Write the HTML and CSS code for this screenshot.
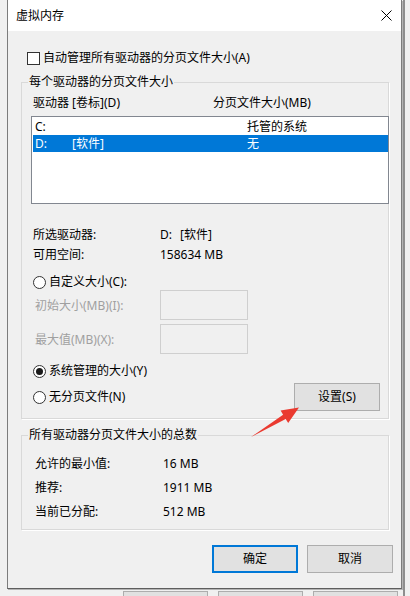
FILE: index.html
```html
<!DOCTYPE html>
<html lang="zh-CN">
<head>
<meta charset="utf-8">
<title>虚拟内存</title>
<link rel="stylesheet" href="styles.css">
</head>
<body>
<div class="desktop-edge"></div>
<div class="bg-buttons"><span></span><span></span><span></span></div>
<div class="window">
  <div class="titlebar">
    <span class="title">虚拟内存</span>
    <svg class="close" width="11" height="11" viewBox="0 0 11 11"><path d="M0.5 0.5L10.5 10.5M10.5 0.5L0.5 10.5" stroke="#000" stroke-width="1" fill="none"/></svg>
  </div>
  <div class="content">
    <div class="check-row"><span class="checkbox"></span><span>自动管理所有驱动器的分页文件大小(A)</span></div>

    <fieldset class="group g1">
      <legend>每个驱动器的分页文件大小</legend>
      <div class="list-head"><span class="h1">驱动器 [卷标](D)</span><span>分页文件大小(MB)</span></div>
      <div class="list">
        <div class="row"><span class="c1">C:</span><span class="c2"></span><span>托管的系统</span></div>
        <div class="row sel"><span class="c1">D:</span><span class="c2">[软件]</span><span>无</span></div>
      </div>
      <div class="info">
        <div class="info-row"><span class="k">所选驱动器:</span><span>D:</span><span class="vol">[软件]</span></div>
        <div class="info-row"><span class="k">可用空间:</span><span>158634 MB</span></div>
      </div>
      <div class="radio-row r1"><span class="radio"></span><span>自定义大小(C):</span></div>
      <div class="field-row f1"><span class="flabel">初始大小(MB)(I):</span><span class="input"></span></div>
      <div class="field-row f2"><span class="flabel">最大值(MB)(X):</span><span class="input"></span></div>
      <div class="radio-row r2"><span class="radio checked"></span><span>系统管理的大小(Y)</span></div>
      <div class="radio-row r3"><span class="radio"></span><span>无分页文件(N)</span><span class="btn set">设置(S)</span></div>
    </fieldset>

    <fieldset class="group g2">
      <legend>所有驱动器分页文件大小的总数</legend>
      <div class="sum">
        <div class="sum-row"><span class="k">允许的最小值:</span><span>16 MB</span></div>
        <div class="sum-row"><span class="k">推荐:</span><span>1911 MB</span></div>
        <div class="sum-row"><span class="k">当前已分配:</span><span>512 MB</span></div>
      </div>
    </fieldset>

    <div class="buttons">
      <span class="btn ok">确定</span>
      <span class="btn">取消</span>
    </div>
  </div>
</div>
<svg class="arrow" width="410" height="596" viewBox="0 0 410 596">
  <polygon points="251,437 283.1,414.7 280.6,410.6 299,407.5 288.2,423 285.7,418.9" fill="#ea3a30"/>
</svg>
</body>
</html>
```

FILE: styles.css
```css
html, body {
  margin: 0;
  padding: 0;
}
body {
  width: 410px;
  height: 596px;
  overflow: hidden;
  position: relative;
  background: #f0f0f0;
  font-family: "Noto Sans", "Noto Sans CJK SC", sans-serif;
  font-size: 12px;
  color: #000;
}
.desktop-edge {
  position: absolute;
  left: 403px;
  top: 0;
  width: 2px;
  height: 596px;
  background: #8e8e8e;
}
.bg-buttons {
  position: absolute;
  left: 123px;
  top: 591px;
  display: flex;
  gap: 10px;
}
.bg-buttons span {
  width: 85px;
  height: 20px;
  box-sizing: border-box;
  border: 1px solid #adadad;
  background: #e1e1e1;
}
.window {
  position: relative;
  margin-left: 7px;
  width: 395px;
  height: 589px;
  box-sizing: border-box;
  border: 1px solid #7c7c7c;
  border-top: 0;
  border-bottom-color: #5e5e5e;
  background: #f0f0f0;
  box-shadow: 1px 1px 0 #b4b4b4;
}
.titlebar {
  height: 31px;
  background: #fff;
  display: flex;
  align-items: center;
  padding: 0 9px 0 8px;
}
.title {
  line-height: 16px;
  flex: 1;
}
.close {
  display: block;
  margin-top: 0;
}
.content {
  padding: 0 8px 0 13px;
}
.check-row {
  margin-top: 19px;
  height: 16px;
  line-height: 16px;
  display: flex;
  align-items: center;
  gap: 3px;
  padding-left: 6px;
}
.checkbox {
  width: 13px;
  height: 13px;
  box-sizing: border-box;
  border: 1px solid #333;
  background: #fff;
}
.group {
  margin: 8px 4px 0 0;
  padding: 0;
  border: 1px solid #d9d9d9;
  box-shadow: 1px 1px 0 #fff;
  min-width: 0;
}
.group legend {
  margin-left: 6px;
  padding: 0 1px;
  line-height: 16px;
  height: 16px;
}
.g1 {
  padding-bottom: 7px;
}
.list-head {
  margin-top: 5px;
  height: 16px;
  line-height: 16px;
  display: flex;
  padding-left: 11px;
}
.h1 {
  width: 180px;
}
.list {
  margin: 5px 0 0 9px;
  width: 358px;
  height: 88px;
  box-sizing: border-box;
  border: 1px solid #828790;
  background: #fff;
  padding: 1px 0 0 1px;
  position: relative;
}
.row {
  height: 17px;
  line-height: 17px;
  display: flex;
  padding-left: 2px;
}
.c1 {
  width: 37px;
}
.c2 {
  width: 175px;
}
.row.sel {
  background: #0078d7;
  color: #fff;
}
.info {
  margin-top: 21px;
}
.info-row {
  height: 20px;
  line-height: 20px;
  display: flex;
  padding-left: 11px;
}
.info-row .k {
  width: 127px;
}
.vol {
  padding-left: 8px;
}
.radio-row {
  display: flex;
  align-items: center;
  gap: 3px;
  padding-left: 11px;
  height: 16px;
  line-height: 16px;
}
.r1 {
  margin-top: 9px;
}
.r2 {
  margin-top: 9px;
}
.r3 {
  margin-top: 4px;
  height: 28px;
  padding-right: 8px;
}
.radio {
  width: 13px;
  height: 13px;
  box-sizing: border-box;
  border: 1px solid #333;
  border-radius: 50%;
  background: #fff;
  position: relative;
}
.radio.checked::after {
  content: "";
  position: absolute;
  left: 2px;
  top: 2px;
  width: 7px;
  height: 7px;
  border-radius: 50%;
  background: #1a1a1a;
}
.field-row {
  display: flex;
  align-items: center;
  height: 30px;
}
.f2 {
  margin-top: 4px;
}
.flabel {
  width: 125px;
  padding-left: 13px;
  color: #a0a0a0;
  line-height: 16px;
  padding-top: 2px;
}
.input {
  width: 88px;
  height: 30px;
  box-sizing: border-box;
  border: 1px solid #cfcfcf;
  background: #f0f0f0;
}
.btn {
  width: 86px;
  height: 28px;
  box-sizing: border-box;
  border: 1px solid #adadad;
  background: #e1e1e1;
  display: flex;
  align-items: center;
  justify-content: center;
  line-height: 16px;
}
.set {
  margin-left: auto;
}
.g2 {
  padding-bottom: 5px;
}
.sum {
  margin-top: 9px;
}
.sum-row {
  height: 24px;
  line-height: 24px;
  display: flex;
  padding-left: 13px;
}
.sum-row .k {
  width: 128px;
}
.buttons {
  margin-top: 15px;
  display: flex;
  justify-content: flex-end;
  gap: 9px;
}
.btn.ok {
  border: 2px solid #0078d7;
}
.arrow {
  position: absolute;
  left: 0;
  top: 0;
  pointer-events: none;
}
```
